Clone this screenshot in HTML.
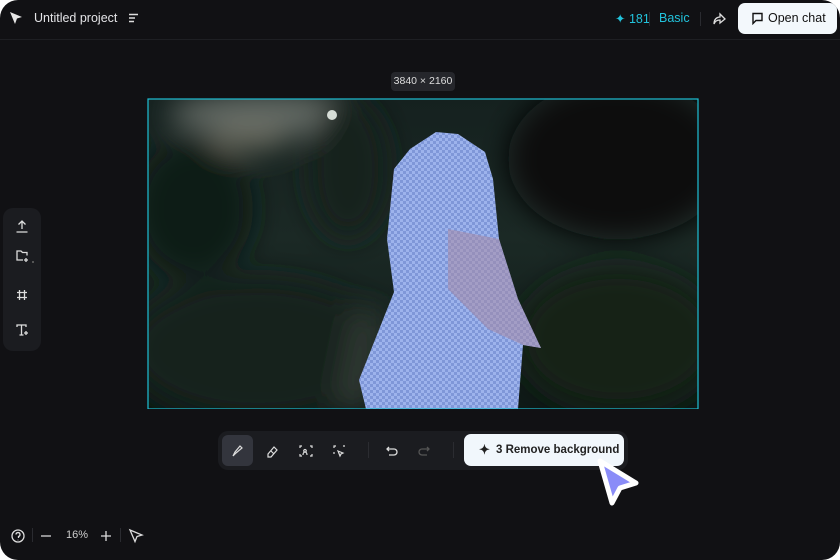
<!DOCTYPE html>
<html><head><style>
html,body{margin:0;padding:0;background:#fff}
body{width:840px;height:560px;position:relative;overflow:hidden;font-family:"Liberation Sans",sans-serif}
#app{position:absolute;inset:0;background:#111114;border-radius:18px;overflow:hidden}
.top{position:absolute;left:0;top:0;width:840px;height:39px;border-bottom:1px solid #1e1f23}
.t{position:absolute;color:#e4e4e7;font-size:12.5px}
.btn{position:absolute;left:738px;top:3px;width:99px;height:31px;background:#f3f8fc;border-radius:7px;color:#111;font-size:12.5px;line-height:31px}
.side{position:absolute;left:3px;top:208px;width:38px;height:143px;background:#1b1c20;border-radius:10px}
.bar{position:absolute;left:218px;top:431px;width:410px;height:39px;background:#1b1c20;border-radius:10px}
.rb{position:absolute;left:464px;top:434px;width:160px;height:32px;background:#f1f7fc;border-radius:7px;font-weight:bold;font-size:11.5px;color:#222;line-height:32px}
</style></head><body><div id="app">
<div class="top"></div>
<svg style="position:absolute;left:9px;top:11px" width="14" height="14" viewBox="0 0 14 14"><path d="M1 1 L13 6 L8 7.5 L6 13 Z" fill="#e6e6e6"/></svg>
<div class="t" style="left:34px;top:11px">Untitled project</div>
<svg style="position:absolute;left:128px;top:13px" width="12" height="10"><path d="M1 1.5h9M1 5h6M1 8.5h5" stroke="#ddd" stroke-width="1.4"/></svg>
<div class="t" style="left:615px;top:11px;color:#22c3dc">✦ 181</div>
<div style="position:absolute;left:649px;top:12px;width:1px;height:14px;background:#2a2b30"></div>
<div class="t" style="left:659px;top:11px;color:#22c3dc">Basic</div>
<div style="position:absolute;left:700px;top:12px;width:1px;height:14px;background:#2a2b30"></div>
<svg style="position:absolute;left:712px;top:12px" width="14" height="14" viewBox="0 0 14 14"><path d="M2 12 C2 7 5 5 8 5 V2 L13 7 L8 11 V8 C5 8 3 9 2 12Z" fill="none" stroke="#ddd" stroke-width="1.3"/></svg>
<div class="btn"><svg style="position:absolute;left:13px;top:9px" width="13" height="13"><path d="M2 1.5h9v7H5l-3 3z" fill="none" stroke="#111" stroke-width="1.4"/></svg><span style="position:absolute;left:30px">Open chat</span></div>
<div style="position:absolute;left:391px;top:72px;width:64px;height:19px;background:#25262b;border-radius:4px;color:#ddd;font-size:10.5px;line-height:19px;text-align:center">3840 × 2160</div>
<svg style="position:absolute;left:147px;top:98px" width="552" height="311" viewBox="-1 -1 552 311">
<defs>
<pattern id="ck" width="6" height="6" patternUnits="userSpaceOnUse"><rect width="6" height="6" fill="#7f97d8"/><rect width="3" height="3" fill="#9db3ec"/><rect x="3" y="3" width="3" height="3" fill="#9db3ec"/></pattern>
<linearGradient id="bg" x1="0" y1="0" x2="0" y2="1"><stop offset="0" stop-color="#15211f"/><stop offset=".45" stop-color="#1b2925"/><stop offset="1" stop-color="#0e1916"/></linearGradient>
<filter id="bl" x="-30%" y="-30%" width="160%" height="160%"><feGaussianBlur stdDeviation="14"/></filter>
<clipPath id="cp"><rect width="550" height="310"/></clipPath>
</defs>
<rect width="550" height="310" fill="url(#bg)"/>
<g clip-path="url(#cp)"><g filter="url(#bl)">
<ellipse cx="120" cy="15" rx="100" ry="22" fill="#6f746e" opacity=".85"/>
<ellipse cx="100" cy="40" rx="40" ry="12" fill="#8a8575" opacity=".6"/>
<ellipse cx="45" cy="110" rx="60" ry="70" fill="#111d18"/>
<ellipse cx="200" cy="70" rx="40" ry="70" fill="#14211b"/>
<ellipse cx="470" cy="60" rx="110" ry="80" fill="#08110f"/>
<ellipse cx="110" cy="250" rx="130" ry="70" fill="#14201a"/>
<path d="M205 210 L235 210 L222 310 L185 310Z" fill="#2f3733"/>
<ellipse cx="470" cy="240" rx="100" ry="70" fill="#132019"/>
</g></g>
<circle cx="184" cy="16" r="5" fill="#e8eee8" opacity=".9"/>
<path d="M288 33 L262 50 L246 70 L239 140 L246 193 L211 281 L218 310 L370 310 L375 246 L393 249 L370 200 L351 140 L345 80 L337 53 L310 35Z" fill="url(#ck)"/>
<path d="M300 130 L351 140 L370 200 L393 249 L375 246 L340 230 L300 190Z" fill="#a88aa6" opacity=".55"/>
<rect x="0" y="0" width="550" height="310" fill="none" stroke="#1ec0d6" stroke-width="1.2"/>
</svg>
<div class="side"></div>
<svg style="position:absolute;left:14px;top:219px" width="16" height="125" fill="none" stroke="#ddd" stroke-width="1.3">
<path d="M8 2v8M4.5 5.5 8 2l3.5 3.5M2.5 13h11"/>
<path d="M3 38v-6h4l1.5 1.5H13v3M3 38v3h6M12 39v4M10 41h4"/>
<path d="M5.5 71v10M10.5 71v10M3 73.5h10M3 78.5h10"/>
<path d="M3 108v-2h9v2M7.5 106v10M5.5 116h4M12 112v4M10 114h4"/>
</svg>
<div style="position:absolute;left:32px;top:261px;width:2px;height:2px;background:#555"></div>
<div class="bar"></div>
<div style="position:absolute;left:222px;top:435px;width:31px;height:31px;background:#33353d;border-radius:6px"></div>
<svg style="position:absolute;left:230px;top:443px" width="120" height="16" fill="none" stroke="#ddd" stroke-width="1.2">
<path d="M3 13l2-4 5-6 2 2-6 5z"/>
<path d="M38 11l6-7 3 3-6 7h-3zM41 8l3 3"/>
<path d="M72 3h-2v2M80 3h2v2M72 13h-2v-2M80 13h2v-2M73 12c0-2 1-3 2-3s2 1 2 3M75 6.5a1.3 1.3 0 1 0 .01 0"/>
<path d="M106 3h-2v2M113 3h2M104 9v2M108 8l5 2-2 1-1 2z"/>
</svg>
<div style="position:absolute;left:368px;top:442px;width:1px;height:16px;background:#2b2c31"></div>
<svg style="position:absolute;left:385px;top:443px" width="50" height="16" fill="none" stroke-width="1.3">
<path d="M4 4L2 6l2 2M2 6h7a3 3 0 0 1 0 6H4" stroke="#ddd"/>
<path d="M42 4l2 2-2 2M44 6h-7a3 3 0 0 0 0 6h5" stroke="#555"/>
</svg>
<div style="position:absolute;left:453px;top:442px;width:1px;height:16px;background:#2b2c31"></div>
<div class="rb"><span style="position:absolute;left:15px;font-size:13px">✦</span><span style="position:absolute;left:32px">3 Remove background</span></div>
<svg style="position:absolute;left:592px;top:455px" width="52" height="54" viewBox="0 0 52 54"><path d="M8 6 L44 28 L28 33 L20 48 Z" fill="#8a8cf8" stroke="#fff" stroke-width="5" stroke-linejoin="round"/></svg>
<svg style="position:absolute;left:10px;top:527px" width="135" height="18" fill="none" stroke="#ddd" stroke-width="1.3">
<circle cx="8" cy="9" r="6"/><path d="M6 7.5a2 2 0 1 1 2.5 2V11M8 12.8v.4"/>
<path d="M31 9h10"/>
<path d="M91 9h10M96 4v10"/>
<path d="M120 3l12 5-5 1.5-2 5z"/>
</svg>
<div style="position:absolute;left:32px;top:528px;width:1px;height:14px;background:#2a2b30"></div>
<div style="position:absolute;left:120px;top:528px;width:1px;height:14px;background:#2a2b30"></div>
<div class="t" style="left:66px;top:529px;font-size:11px;color:#ccc">16%</div>
</div></body></html>
